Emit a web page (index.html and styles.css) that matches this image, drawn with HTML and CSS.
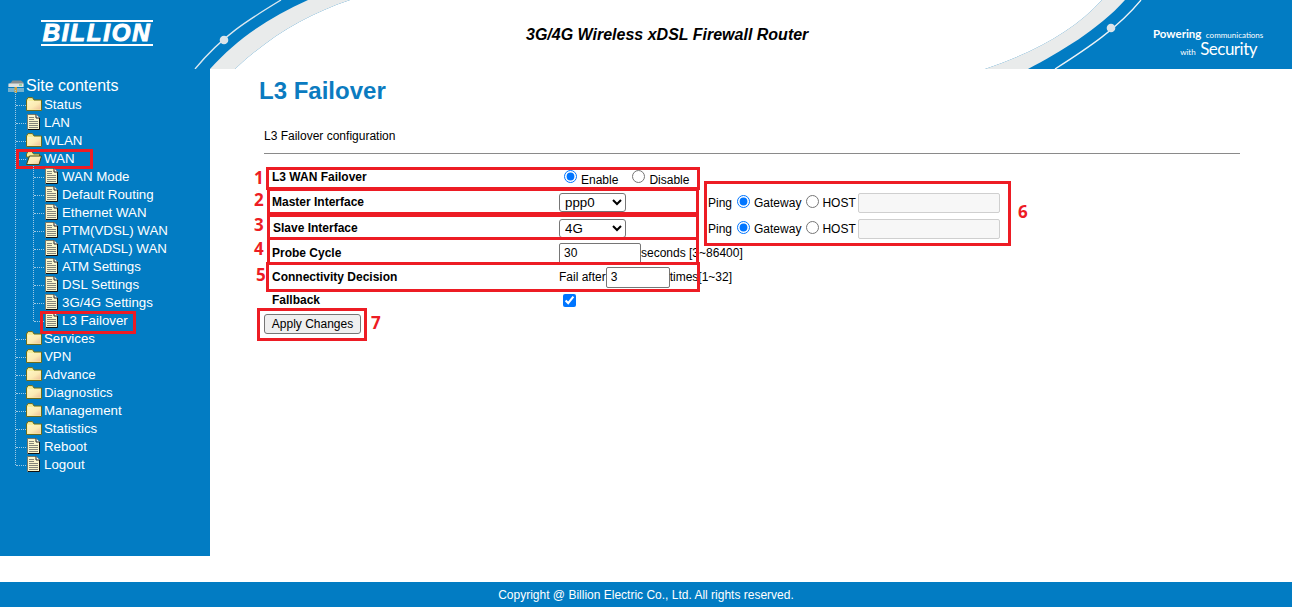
FILE: index.html
```html
<!DOCTYPE html>
<html lang="en">
<head>
<meta charset="utf-8">
<title>L3 Failover</title>
<link rel="stylesheet" href="styles.css">
</head>
<body>
<svg class="defs" width="0" height="0" aria-hidden="true">
  <defs>
    <linearGradient id="fold" x1="0" y1="0" x2="1" y2="1">
      <stop offset="0" stop-color="#fef6c4"/>
      <stop offset=".55" stop-color="#fcebb4"/>
      <stop offset="1" stop-color="#efc09a"/>
    </linearGradient>
    <symbol id="folder" viewBox="0 0 16 14">
      <path d="M.5 3 L2 .6 H6.500 L8 3 H15.500 V13.500 H.5 Z" fill="#f7ee9c" stroke="#6d6a1c"/>
      <path d="M1.500 4 H14.500 V12.500 H1.500 Z" fill="url(#fold)"/>
    </symbol>
    <symbol id="folderopen" viewBox="0 0 16 14">
      <path d="M.5 3 L2 .6 H6 L7.500 3 H13.500 V6 H.5 Z" fill="#f7ee9c" stroke="#6d6a1c"/>
      <path d="M3.500 5 H15.500 L13 13.500 H.5 Z" fill="url(#fold)" stroke="#4a4812"/>
    </symbol>
    <symbol id="doc" viewBox="0 0 13 16">
      <path d="M.5 .5 H9 L12.500 4 V15.500 H.5 Z" fill="#f9f5cc" stroke="#77776a"/>
      <path d="M9 .5 V4 H12.500" fill="#fff" stroke="#222"/>
      <path d="M12.500 4 V15.500 H1" fill="none" stroke="#111"/>
      <path d="M2 3.500 H7 M2 5.500 H7 M2 7.500 H11 M2 9.500 H11 M2 11.500 H11 M2 13.500 H11" stroke="#85857a"/>
    </symbol>
  </defs>
</svg>
<div class="page">
  <header class="top">
    <svg class="top-art" viewBox="0 0 1292 69" preserveAspectRatio="none" aria-hidden="true">
      <path d="M235 69 C268 38 305 15 350 0 H1102 C1075 30 1035 52 985 69 Z" fill="#fff"/>
      <path d="M210 69 C238 38 270 17 308 0 H350 C305 15 268 38 235 69 Z" fill="#e9ebeb"/>
      <path d="M985 69 C1035 52 1075 30 1102 0 H1125 C1098 30 1060 52 1028 69 Z" fill="#e9ebeb"/>
      <path d="M195 69 C222 36 248 20 281 0" fill="none" stroke="#dbe8f0" stroke-width="1.300"/>
      <circle cx="224" cy="40" r="4.300" fill="#dbe4ea"/>
      <path d="M1055 69 C1088 48 1118 28 1141 0" fill="none" stroke="#eef3f6" stroke-width="1.300"/>
      <circle cx="1111" cy="28" r="4.300" fill="#dbe4ea"/>
    </svg>
    <div class="logo"><span class="logo-word">BILLION</span></div>
    <div class="product">3G/4G Wireless xDSL Firewall Router</div>
    <div class="slogan">
      <div><b>Powering</b> <small>communications</small></div>
      <div class="slogan-2"><small>with</small> <span>Security</span></div>
    </div>
  </header>
  <div class="middle">
    <nav class="side">
      <div class="tree-root">
        <svg class="root-icon" viewBox="0 0 16 13" aria-hidden="true">
          <path d="M3 2.500 L4.500 .5 H13 L15.500 2.500 V7 H.5 V4.500 Z" fill="#868d90"/>
          <path d="M.5 3.500 H15.500 V7 H.5 Z" fill="#dfe2e2"/>
          <rect x="11" y="4.500" width="3" height="1" fill="#55c06a"/>
          <path d="M0 9 H16 M0 11 H16" stroke="#e8e8dc" stroke-width="1.200"/>
          <rect x="6.500" y="7" width="2.500" height="6" fill="#d0a03c"/>
        </svg>
        <span>Site contents</span>
      </div>
      <ul class="tree">
        <li class="item"><svg class="ico-f"><use href="#folder"/></svg>Status</li>
        <li class="item"><svg class="ico-d"><use href="#doc"/></svg>LAN</li>
        <li class="item"><svg class="ico-f"><use href="#folder"/></svg>WLAN</li>
        <li class="item"><svg class="ico-f"><use href="#folderopen"/></svg>WAN<i class="mark mark-wan"></i></li>
        <li class="sub-wrap">
          <ul class="tree sub">
            <li class="item"><svg class="ico-d"><use href="#doc"/></svg>WAN Mode</li>
            <li class="item"><svg class="ico-d"><use href="#doc"/></svg>Default Routing</li>
            <li class="item"><svg class="ico-d"><use href="#doc"/></svg>Ethernet WAN</li>
            <li class="item"><svg class="ico-d"><use href="#doc"/></svg>PTM(VDSL) WAN</li>
            <li class="item"><svg class="ico-d"><use href="#doc"/></svg>ATM(ADSL) WAN</li>
            <li class="item"><svg class="ico-d"><use href="#doc"/></svg>ATM Settings</li>
            <li class="item"><svg class="ico-d"><use href="#doc"/></svg>DSL Settings</li>
            <li class="item"><svg class="ico-d"><use href="#doc"/></svg>3G/4G Settings</li>
            <li class="item"><svg class="ico-d"><use href="#doc"/></svg>L3 Failover<i class="mark mark-l3"></i></li>
          </ul>
        </li>
        <li class="item"><svg class="ico-f"><use href="#folder"/></svg>Services</li>
        <li class="item"><svg class="ico-f"><use href="#folder"/></svg>VPN</li>
        <li class="item"><svg class="ico-f"><use href="#folder"/></svg>Advance</li>
        <li class="item"><svg class="ico-f"><use href="#folder"/></svg>Diagnostics</li>
        <li class="item"><svg class="ico-f"><use href="#folder"/></svg>Management</li>
        <li class="item"><svg class="ico-f"><use href="#folder"/></svg>Statistics</li>
        <li class="item"><svg class="ico-d"><use href="#doc"/></svg>Reboot</li>
        <li class="item"><svg class="ico-d"><use href="#doc"/></svg>Logout</li>
      </ul>
    </nav>
    <main class="content">
      <h1 class="title">L3 Failover</h1>
      <p class="desc">L3 Failover configuration</p>
      <hr class="rule">
      <form class="form">
        <div class="row row-1">
          <label class="lbl">L3 WAN Failover</label>
          <div class="val val-radio">
            <input type="radio" name="fo" checked><span class="r-text">Enable</span>
            <input type="radio" name="fo" class="r-second"><span class="r-text">Disable</span>
          </div>
        </div>
        <div class="row row-2">
          <label class="lbl">Master Interface</label>
          <div class="val"><select class="sel"><option>ppp0</option></select></div>
          <div class="ping">Ping <input type="radio" name="p1" checked><span>Gateway</span><input type="radio" name="p1"><span>HOST</span><input class="host" type="text" disabled></div>
        </div>
        <div class="row row-3">
          <label class="lbl lbl-slave">Slave Interface</label>
          <div class="val"><select class="sel"><option>4G</option></select></div>
          <div class="ping">Ping <input type="radio" name="p2" checked><span>Gateway</span><input type="radio" name="p2"><span>HOST</span><input class="host" type="text" disabled></div>
        </div>
        <div class="row row-4">
          <label class="lbl">Probe Cycle</label>
          <div class="val"><input class="num num-probe" type="text" value="30"><span>seconds [3~86400]</span></div>
        </div>
        <div class="row row-5">
          <label class="lbl">Connectivity Decision</label>
          <div class="val"><span>Fail after</span><input class="num num-fail" type="text" value="3"><span>times[1~32]</span></div>
        </div>
        <div class="row row-6">
          <label class="lbl">Fallback</label>
          <div class="val"><input class="chk" type="checkbox" checked></div>
        </div>
        <div class="actions"><button class="btn" type="button">Apply Changes</button></div>
        <i class="mark box-1"></i><i class="mark box-2"></i><i class="mark box-3"></i><i class="mark box-4"></i><i class="mark box-5"></i><i class="mark box-6"></i><i class="mark box-7"></i>
        <b class="num-note n1">1</b><b class="num-note n2">2</b><b class="num-note n3">3</b><b class="num-note n4">4</b><b class="num-note n5">5</b><b class="num-note n6">6</b><b class="num-note n7">7</b>
      </form>
    </main>
  </div>
  <footer class="foot">Copyright @ Billion Electric Co., Ltd. All rights reserved.</footer>
</div>
</body>
</html>
```
FILE: styles.css
```css
* { box-sizing: border-box; }
html, body { margin: 0; padding: 0; background: #fff; height: 100%; overflow: hidden; }
body { font-family: "Liberation Sans", Arial, sans-serif; color: #000; }
.defs { position: absolute; }
.page { width: 1292px; height: 607px; display: flex; flex-direction: column; }

.top { position: relative; height: 69px; flex: none; background: #027cc3; display: flex; align-items: center; }
.top-art { position: absolute; inset: 0; width: 100%; height: 100%; }
.logo { position: relative; margin-left: 41px; width: 112px; height: 26px; margin-top: -3px; border-top: 2px solid #fff; border-bottom: 2px solid #fff; display: flex; align-items: center; justify-content: center; overflow: hidden; }
.logo-word { color: #fff; font-weight: 700; font-style: italic; font-size: 24px; line-height: 20px; letter-spacing: 1.800px; -webkit-text-stroke: 1px #fff; }
.product { position: absolute; left: 526px; top: 26px; font-size: 16px; line-height: 18px; font-weight: 700; font-style: italic; color: #000; }
.slogan { position: absolute; left: 1153px; top: 26px; width: 108px; color: #fff; line-height: 14px; white-space: nowrap; }
.slogan b { font-size: 11.500px; font-family: "Lato", sans-serif; }
.slogan small { font-size: 8px; font-family: "Lato", sans-serif; }
.slogan-2 { text-align: right; padding-right: 4px; }
.slogan-2 span { font-size: 17px; line-height: 14px; letter-spacing: -.5px; font-family: "Lato", sans-serif; }

.middle { flex: 1; display: flex; min-height: 0; }
.side { width: 210px; height: 487px; background: #027cc3; color: #fff; padding-top: 8px; position: relative; }
.tree-root { display: flex; align-items: center; height: 18px; padding-left: 8px; font-size: 16px; }
.root-icon { width: 16px; height: 13px; margin-right: 2px; }
.tree, .tree ul { list-style: none; margin: 0; padding: 0; }
.tree { position: relative; margin: 1px 0 0 15px; }
.tree::before { content: ""; position: absolute; left: 0; top: -6px; bottom: 9px; border-left: 1px dotted #9ec9e4; }
.tree.sub { margin: 0 0 0 18px; }
.tree.sub::before { top: -2px; bottom: 9px; }
.item { position: relative; display: flex; align-items: center; height: 18px; font-size: 13.3px; line-height: 18px; padding-left: 11px; white-space: nowrap; }
.item::before { content: ""; position: absolute; left: 1px; top: 9px; width: 10px; border-top: 1px dotted #9ec9e4; }
.ico-f { width: 16px; height: 14px; margin-right: 2px; flex: none; position: relative; top: -1px; }
.ico-d { width: 13px; height: 16px; margin: 0 4px 0 1px; flex: none; position: relative; top: -1px; }
.mark { position: absolute; border: 3px solid #ed1c24; display: block; pointer-events: none; }
.mark-wan { left: 1px; top: -1px; width: 77px; height: 20px; }
.mark-l3 { left: 7px; top: -1px; width: 96px; height: 23px; }

.content { flex: 1; padding: 0 52px 0 49px; position: relative; }
.title { margin: 8px 0 0; font-size: 24px; line-height: 28px; font-weight: 700; color: #0b7bc0; }
.desc { margin: 24px 0 0 5px; font-size: 12px; line-height: 14px; }
.rule { margin: 10px 0 0 5px; border: 0; border-top: 1px solid #8a8a8a; height: 1px; width: 976px; }

.form { position: relative; margin: 10px 0 0 13px; font-size: 12px; }
.row { display: flex; align-items: center; position: relative; }
.lbl { width: 287px; font-weight: 700; flex: none; }
.lbl-slave { padding-left: 1px; }
.val { display: flex; align-items: center; white-space: nowrap; }
.row-1 { height: 25px; }
.row-2 { height: 26px; }
.row-3 { height: 26px; }
.row-4 { height: 24px; }
.row-5 { height: 24px; }
.row-6 { height: 22px; }
.val-radio { padding-left: 5px; }
.val-radio .r-text { position: relative; top: 3px; }
input[type=radio] { margin: 0 4px 0 0; width: 13px; height: 13px; accent-color: #0075ff; }
.r-second { margin-left: 14px !important; }
.sel { width: 67px; height: 19px; font: 13.3px "Liberation Sans", Arial, sans-serif; padding: 0 0 0 1px; background: #fff; border: 1px solid #767676; border-radius: 3px; color: #000; }
.num { height: 21px; padding: 1px 2px; border: 1px solid #767676; border-radius: 2px; font: 12px "Liberation Sans", Arial, sans-serif; outline: 0; }
.num-probe { width: 82px; padding-left: 4px; }
.num-fail { width: 64px; padding-left: 4px; }
.ping { position: absolute; left: 436px; top: 1px; height: 100%; width: 292px; display: flex; align-items: center; white-space: nowrap; }
.ping input[type=radio] { margin: 0 4px 0 5px; position: relative; top: -2px; }
.ping span + input[type=radio] { margin-right: 3px; }
.host { margin-left: 2px; width: 142px; height: 20px; background: #f7f7f7; border: 1px solid #cfcfcf; border-radius: 2px; padding: 0; }
.chk { margin: 0 0 0 4px; width: 13px; height: 13px; accent-color: #0075ff; }
.actions { height: 30px; display: flex; align-items: flex-start; }
.btn { margin: 3px 0 0 -8px; height: 20px; width: 97px; padding: 0; font: 12px "Liberation Sans", Arial, sans-serif; background: #efefef; border: 1px solid #767676; border-radius: 3px; color: #000; }

.box-1 { left: -6px; top: 3px; width: 434px; height: 23px; }
.box-2 { left: -5px; top: 24px; width: 432px; height: 27px; }
.box-3 { left: -5px; top: 50px; width: 432px; height: 26px; }
.box-4 { left: -5px; top: 73px; width: 432px; height: 28px; }
.box-5 { left: -6px; top: 98px; width: 434px; height: 30px; }
.box-6 { left: 432px; top: 17px; width: 307px; height: 65px; }
.box-7 { left: -15px; top: 144px; width: 110px; height: 33px; }
.num-note { position: absolute; color: #ed1c24; font-family: "Open Sans", sans-serif; font-size: 17px; line-height: 16px; font-weight: 700; }
.n1 { left: -18px; top: 6px; }
.n2 { left: -18px; top: 28px; }
.n3 { left: -18px; top: 53px; }
.n4 { left: -18px; top: 77px; }
.n5 { left: -16px; top: 103px; }
.n6 { left: 746px; top: 40px; }
.n7 { left: 99px; top: 151px; }

.foot { margin-top: 26px; height: 25px; flex: none; background: #027cc3; color: #fff; font-size: 12px; line-height: 26px; text-align: center; }
```
